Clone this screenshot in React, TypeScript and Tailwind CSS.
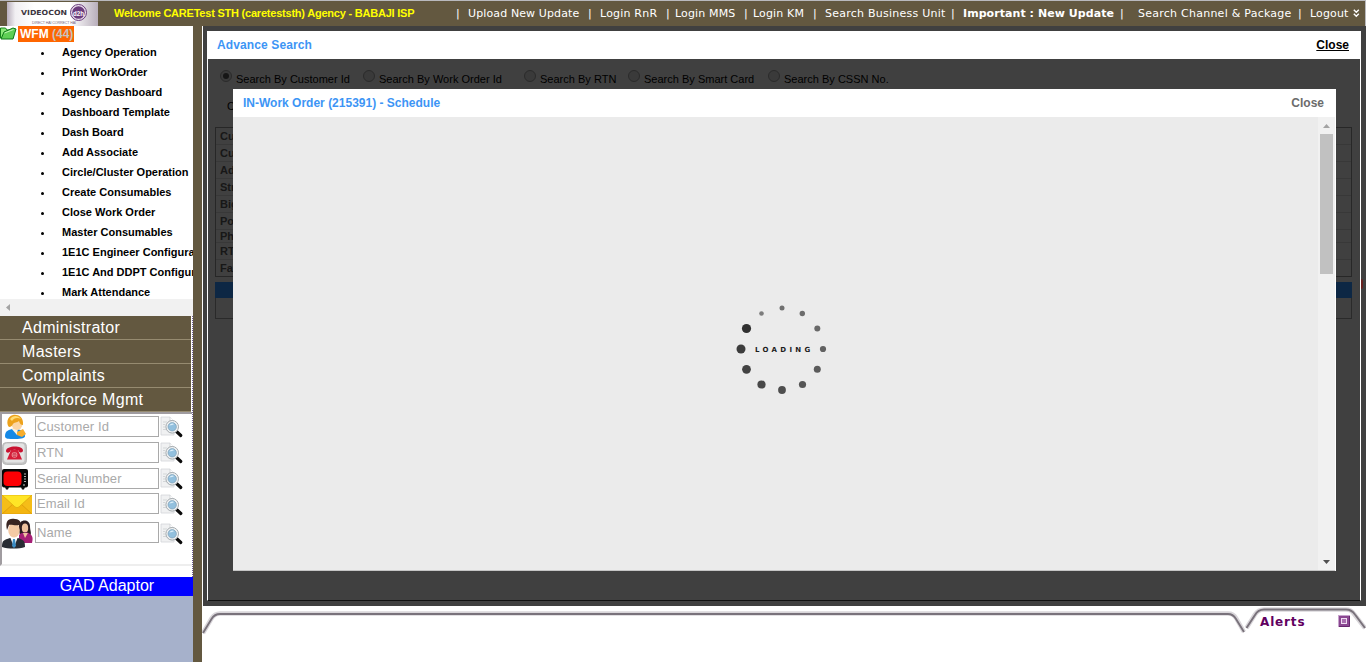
import type { ReactNode } from "react";

const sans = "font-['Liberation_Sans',Arial,sans-serif]";

const menuItems = [
  "Agency Operation",
  "Print WorkOrder",
  "Agency Dashboard",
  "Dashboard Template",
  "Dash Board",
  "Add Associate",
  "Circle/Cluster Operation",
  "Create Consumables",
  "Close Work Order",
  "Master Consumables",
  "1E1C Engineer Configuration",
  "1E1C And DDPT Configuration",
  "Mark Attendance",
];

function Logo() {
  return (
    <svg width="91" height="24" viewBox="0 0 91 24" className="mt-px ml-[7px] shrink-0">
      <defs>
        <linearGradient id="logoBg" x1="0" x2="1" y1="0" y2="0">
          <stop offset="0" stopColor="#b9b0bd" />
          <stop offset="0.09" stopColor="#f1eff2" />
          <stop offset="0.3" stopColor="#ffffff" />
          <stop offset="0.7" stopColor="#ffffff" />
          <stop offset="1" stopColor="#b8aebb" />
        </linearGradient>
      </defs>
      <rect width="91" height="24" fill="url(#logoBg)" />
      <text x="14" y="13" fontSize="7" textLength="46" lengthAdjust="spacingAndGlyphs" fontFamily="DejaVu Sans" fontWeight="bold" fill="#3c3540">VIDEOCON</text>
      <text x="25" y="21.500" fontSize="3.600" textLength="44" fontFamily="Liberation Sans" fill="#77657e">DIRECT HAI CORRECT HAI</text>
      <circle cx="71.500" cy="10.500" r="8" fill="#e9deec" stroke="#6b3c7d" strokeWidth="1" />
      <circle cx="71.500" cy="10.500" r="6.300" fill="#6b3c7d" />
      <text x="66" y="13.500" fontSize="8" textLength="11" lengthAdjust="spacingAndGlyphs" fontFamily="Liberation Sans" fontWeight="bold" fill="#ffffff">d2h</text>
    </svg>
  );
}

function Header() {
  const t = "block shrink-0 whitespace-pre";
  return (
    <header className="flex h-[26px] w-full border-t border-r border-[#b9b9bd] bg-[#635840] text-[11px] leading-[25px] text-white font-['DejaVu_Sans',Verdana,sans-serif]">
      <Logo />
      <span className={`ml-4 w-[342px] text-[11px] font-bold leading-6 tracking-[-0.22px] text-[#ffff00] ${sans} ${t}`}>
        Welcome CARETest STH (careteststh) Agency - BABAJI ISP
      </span>
      <span className={`w-3 ${t}`}>|</span>
      <span className={`w-[120px] tracking-[0.12px] ${t}`}>Upload New Update</span>
      <span className={`w-3 ${t}`}>|</span>
      <span className={`w-[66px] tracking-[0.2px] ${t}`}>Login RnR</span>
      <span className={`w-[9px] ${t}`}>|</span>
      <span className={`w-[69px] tracking-[0.15px] ${t}`}>Login MMS</span>
      <span className={`w-[9px] ${t}`}>|</span>
      <span className={`w-[60px] tracking-[0.15px] ${t}`}>Login KM</span>
      <span className={`w-3 ${t}`}>|</span>
      <span className={`w-[126px] tracking-[0.24px] ${t}`}>Search Business Unit</span>
      <span className={`w-3 ${t}`}>|</span>
      <span className={`w-[157px] font-bold tracking-[0.06px] ${t}`}>Important : New Update</span>
      <span className={`w-[18px] ${t}`}>|</span>
      <span className={`w-[160px] tracking-[0.25px] ${t}`}>Search Channel &amp; Package</span>
      <span className={`w-3 ${t}`}>|</span>
      <span className={`w-[43px] tracking-[0.15px] ${t}`}>Logout</span>
      <svg width="7" height="9" viewBox="0 0 7 9" className="mt-2 shrink-0" fill="none" stroke="#fff" strokeWidth="1.400">
        <path d="M.8.8 3.3 3.3 5.8.8M.8 4.8 3.3 7.3 5.8 4.8" />
      </svg>
    </header>
  );
}

function SearchIcon() {
  return (
    <svg width="24" height="22" viewBox="0 0 24 22" className="shrink-0">
      <path d="M1 1h9l4 4v14H1z" fill="#f0f1f2" stroke="#d3d6d9" strokeWidth=".8" />
      <path d="M10 1v4h4" fill="#fff" stroke="#c9cccf" strokeWidth=".7" />
      <path d="M3 6h4M3 8.500h2M3 11h2M3 13.500h3" stroke="#c6cacd" strokeWidth=".7" />
      <path d="m16.500 15.500 4.300 4" stroke="#0b0b0b" strokeWidth="3.200" strokeLinecap="round" />
      <circle cx="12.200" cy="10.800" r="6.300" fill="#f3f5f6" stroke="#a3a9ad" strokeWidth="1" />
      <circle cx="12.200" cy="10.800" r="4.200" fill="#92c0de" stroke="#7b9cb3" strokeWidth=".7" />
      <path d="M9.200 9.500a3.500 3.500 0 0 1 5-1.500c-1 1-3 1-5 1.500" fill="#dceef9" />
    </svg>
  );
}

function CustomerIcon() {
  return (
    <svg width="30" height="26" viewBox="0 0 30 26">
      <path d="M3 22c0-5 4-7 9-7 7 0 11 2 11 7 0 2-3 3-10 3S3 25 3 22z" fill="#1689e6" />
      <path d="m9 14 6 7 1-7z" fill="#fff2dc" />
      <ellipse cx="15" cy="10" rx="5.500" ry="6" fill="#fcd6a4" />
      <path d="M7 13C4 10 5 2 11 1c4-1 11 1 10 10-2 0-3-1-4-4-2 2-5 1-6 3-1 2-2 3-4 3z" fill="#eda21b" />
      <path d="M8 5c3-4 8-4 11 0-4-2-7-1-9 2z" fill="#ffdc72" />
      <path d="m15 18 6-3 3 5-4 3-5-2z" fill="#f7ad2c" />
    </svg>
  );
}

function PhoneIcon() {
  return (
    <svg width="25" height="23" viewBox="0 0 25 23">
      <rect x=".5" y=".5" width="24" height="22" rx="4" fill="#c4c4c4" stroke="#b8b8b8" />
      <rect x="2" y="1.500" width="20.500" height="19" rx="3" fill="#e3e3e3" />
      <path d="M4 9c0-6 17-6 17-.5 0 2.500-4.500 2.500-4.500 0-3-1-5-1-8 0C8.500 11 4 11.500 4 9z" fill="#c9112f" />
      <path d="M9 8h7l4 9.500H5z" fill="#d41c38" />
      <circle cx="12.500" cy="12.800" r="2.900" fill="#ee8792" />
      <path d="M11 11.300h3M10.500 12.800h4M11 14.300h3" stroke="#b30e29" strokeWidth=".6" />
    </svg>
  );
}

function TvIcon() {
  return (
    <svg width="26" height="21" viewBox="0 0 26 21">
      <rect width="26" height="18.500" rx="2" fill="#060606" />
      <path d="M3 18h4l-1 2.500H4zM19 18h4l-1 2.500h-2z" fill="#111" />
      <rect x="1.500" y="2.500" width="18" height="14.500" rx="4" fill="#fd0004" />
      <path d="M22 5h2M22 7.500h2M22 10h2M22 12.500h2" stroke="#c7c7c7" strokeWidth=".9" />
      <circle cx="22" cy="16" r="1" fill="#888" />
    </svg>
  );
}

function MailIcon() {
  return (
    <svg width="30" height="19" viewBox="0 0 30 19">
      <rect width="30" height="19" fill="#f5bd18" />
      <path d="m0 19 11-10 4 3 4-3 11 10z" fill="#f3b510" stroke="#da9a0c" strokeWidth=".8" />
      <path d="M0 0h30L18 11c-2 2-4 2-6 0z" fill="#ffe526" stroke="#dda90c" strokeWidth=".8" />
    </svg>
  );
}

function PeopleIcon() {
  return (
    <svg width="31" height="31" viewBox="0 0 31 31">
      <path d="M17 9c0-9 11-8 11-1 0 5 2 7 0 10h-9c-2-2-2-5-2-9" fill="#291a1e" />
      <ellipse cx="23" cy="10" rx="3.200" ry="4.500" fill="#efc19e" />
      <path d="M17 17c3-3 9-3 11-1 3 2 3 5 2 9H17z" fill="#a51e75" />
      <path d="m21 15 2 5 3-5z" fill="#efc19e" />
      <path d="M0 29c0-7 2-7 8-9h8c6 2 7 3 7 9-6 2-17 2-23 0z" fill="#292d34" />
      <path d="m8 19 4 10 4-10z" fill="#fff" />
      <path d="m11 21-1 7 2 2 2-2-1-7z" fill="#3b8dc5" />
      <ellipse cx="12" cy="12" rx="5.800" ry="7.500" fill="#f4caa5" />
      <path d="M5 12C3 3 6 0 13 1c6 0 7 5 5 11l-1-5c-4 1-8-1-10 0z" fill="#392522" />
    </svg>
  );
}

const lookups: { label: string; row: string; icon: ReactNode }[] = [
  { label: "Customer Id", row: "h-[26px]", icon: <CustomerIcon /> },
  { label: "RTN", row: "h-[26px]", icon: <PhoneIcon /> },
  { label: "Serial Number", row: "h-[26px]", icon: <TvIcon /> },
  { label: "Email Id", row: "h-[25px]", icon: <MailIcon /> },
  { label: "Name", row: "h-[33px]", icon: <PeopleIcon /> },
];

function Sidebar() {
  return (
    <aside className={`flex h-full w-[193px] shrink-0 flex-col bg-[#a6b1cb] ${sans}`}>
      <div className="h-[273px] shrink-0 overflow-hidden bg-white">
        <div className="flex h-4 items-start">
          <svg width="18" height="15" viewBox="0 0 18 15" className="shrink-0">
            <path d="M.5 12V2h5l1.500 2h6v8z" fill="#8be878" stroke="#16851b" />
            <path d="M1 13 4 6l9-4 3 1-3 10z" fill="#5fcf55" stroke="#0e7918" />
            <path d="m4.500 7 9-3.500" stroke="#c3f7b5" />
          </svg>
          <span className="block h-4 w-14 whitespace-pre bg-[#ff6600] pl-[2px] text-[12px] font-bold leading-4 text-white">
            WFM <span className="text-[#c8c2bd]">(44)</span>
          </span>
        </div>
        <ul className="text-[11px] font-bold leading-5 text-black">
          {menuItems.map((item) => (
            <li key={item} className="flex h-5 items-center whitespace-nowrap">
              <span className="mt-[3px] ml-[41px] mr-[18px] size-[3px] shrink-0 rounded-full bg-black" />
              <span>{item}</span>
            </li>
          ))}
        </ul>
      </div>
      <div className="flex h-[17px] shrink-0 items-center bg-[#f1f1f1] pl-[6px]">
        <svg width="4" height="7" viewBox="0 0 4 7"><path d="M4 0v7L0 3.500z" fill="#a3a3a3" /></svg>
      </div>
      <div className="flex h-[261px] shrink-0 flex-col border-r border-dotted border-[#6d5a94] bg-white">
        <nav className="w-[191px] text-[16px] leading-[23px] tracking-[0.3px] text-white">
          {["Administrator", "Masters", "Complaints", "Workforce Mgmt"].map((s) => (
            <div key={s} className="h-6 border-b border-[#968b70] bg-[#635840] pl-[22px]">{s}</div>
          ))}
        </nav>
        <div className="flex h-[154px] w-[192px] flex-col border-t-2 border-b-2 border-l-2 border-solid border-t-[#a09ca0] border-b-[#eeeeee] border-l-[#a09ca0]">
          {lookups.map((l) => (
            <div key={l.label} className={`flex shrink-0 items-center ${l.row}`}>
              <div className="flex w-[33px] shrink-0 items-center">{l.icon}</div>
              <div className="mb-[2px] h-[21px] w-[124px] shrink-0 border border-[#a9a9a9] pl-px text-[13px] leading-[19px] tracking-[0.12px] text-[#a9a9a9]">{l.label}</div>
              <div className="ml-px flex"><SearchIcon /></div>
            </div>
          ))}
        </div>
      </div>
      <div className="h-[19px] shrink-0 bg-[#0000ff] pl-[21px] text-center text-[16px] leading-[18px] text-white">GAD Adaptor</div>
    </aside>
  );
}

function Radio({ label, width, on }: { label: string; width: string; on?: boolean }) {
  return (
    <span className={`flex shrink-0 whitespace-nowrap ${width}`}>
      <span className="mr-1 flex size-3 shrink-0 items-center justify-center rounded-full border border-[#2b2b2b] bg-[#3a3a3a]">
        {on && <span className="size-[6px] rounded-full bg-[#161616]" />}
      </span>
      <span className="pt-[3px] text-[11px] leading-3 tracking-[0.01px] text-black">{label}</span>
    </span>
  );
}

const tableRows = [
  { t: "Customer Id", h: "h-[17px]" },
  { t: "Customer Name", h: "h-[17px]" },
  { t: "Address", h: "h-[17px]" },
  { t: "Street", h: "h-[17px]" },
  { t: "Big City", h: "h-[17px]" },
  { t: "Postal Code", h: "h-[17px]" },
  { t: "Phone", h: "h-[13px]" },
  { t: "RTN", h: "h-[17px]" },
  { t: "Fax", h: "h-[16px]" },
];

function Spinner() {
  const dots: [number, number, number, string][] = [
    [62, 18, 2.5, "#707070"], [82.3, 23.5, 2.7, "#6c6c6c"], [97.3, 38.5, 3, "#686868"],
    [103, 59, 3.1, "#616161"], [97.3, 79.3, 3.5, "#5b5b5b"], [82.5, 94.5, 3.6, "#555555"],
    [62, 100, 3.9, "#4e4e4e"], [41.5, 94.5, 4.1, "#484848"], [26.5, 79.3, 4.4, "#424242"],
    [21, 59, 4.5, "#3c3c3c"], [26.5, 38.5, 4.6, "#303030"], [41.5, 23.5, 2.3, "#7c7c7c"],
  ];
  return (
    <div className="grid h-[120px] w-[130px] place-items-center">
      <svg width="130" height="120" viewBox="0 0 130 120" className="col-start-1 row-start-1">
        {dots.map(([x, y, r, f]) => <circle key={`${x}-${y}`} cx={x} cy={y} r={r} fill={f} />)}
      </svg>
      <span className="col-start-1 row-start-1 w-[60px] whitespace-nowrap text-[7px] font-bold leading-[8px] tracking-[3.3px] text-[#1c1c1c] font-['DejaVu_Sans',sans-serif]">LOADING</span>
    </div>
  );
}

function ScheduleDialog() {
  return (
    <div className="absolute top-[58px] left-[25px] flex h-[482px] w-[1103px] flex-col bg-white">
      <div className="flex h-7 shrink-0 justify-between pr-3 pl-[10px] text-[12px] font-bold leading-7">
        <span className="text-[#3d95f5]">IN-Work Order (215391) - Schedule</span>
        <span className="text-[#6c6c6c]">Close</span>
      </div>
      <div className="mr-px flex h-[454px] border-b border-[#c5c5c5] bg-[#ebebeb]">
        <div className="flex-1 pt-[173px] pl-[487px]"><Spinner /></div>
        <div className="flex w-[17px] flex-col items-center bg-[#f1f1f1]">
          <svg width="17" height="17" viewBox="0 0 17 17"><path d="M5 11 8.500 7 12 11z" fill="#a3a3a3" /></svg>
          <div className="h-[140px] w-[13px] bg-[#c1c1c1]" />
          <svg width="17" height="17" viewBox="0 0 17 17" className="mt-auto"><path d="M5 7h7l-3.500 4z" fill="#505050" /></svg>
        </div>
      </div>
    </div>
  );
}

function Workspace() {
  return (
    <div className={`relative flex h-[570px] w-[1154px] flex-col border-x border-b border-x-white border-b-[#111111] bg-[#404040] ${sans}`}>
      <div className="flex h-7 shrink-0 justify-between bg-white pr-[11px] pl-[9px] text-[12px] font-bold leading-7">
        <span className="tracking-[0.12px] text-[#3d95f5]">Advance Search</span>
        <span className="text-black underline">Close</span>
      </div>
      <div className="mt-[11px] flex h-[26px] shrink-0 pl-3">
        <Radio label="Search By Customer Id" width="w-[143px]" on />
        <Radio label="Search By Work Order Id" width="w-[161px]" />
        <Radio label="Search By RTN" width="w-[104px]" />
        <Radio label="Search By Smart Card" width="w-[140px]" />
        <Radio label="Search By CSSN No." width="w-[130px]" />
      </div>
      <div className="h-[31px] shrink-0 pl-[19px] pt-[2px] text-[11px] leading-4 text-black">Customer Id</div>
      <div className="mx-[7px] h-[150px] w-[1137px] shrink-0 border border-[#272727]">
        {tableRows.map((r) => (
          <div key={r.t} className={`flex items-center border-b border-[#383838] pl-1 text-[11px] font-bold leading-4 text-[#171717] last:border-b-0 ${r.h}`}>{r.t}</div>
        ))}
      </div>
      <div className="mx-[7px] mt-[5px] h-4 w-[1137px] shrink-0 bg-[#0d2744]" />
      <div className="mx-[7px] h-[21px] w-[1137px] shrink-0 border border-t-0 border-[#2a2a2a]" />
      <ScheduleDialog />
    </div>
  );
}

function AlertsBar() {
  return (
    <footer className="grid h-14 w-full overflow-hidden bg-white">
      <svg width="1164" height="56" viewBox="0 0 1164 56" className="col-start-1 row-start-1" fill="none">
        <path d="M1 27 9.500 12.500Q12.500 7.500 18 7.500H1026Q1031.500 7.500 1034 12L1042 26" stroke="#d9d6da" strokeWidth="4.500" />
        <path d="M1 27 9.500 13Q12.500 8 18 8H1026Q1031 8 1034 13L1042 26" stroke="#79727b" strokeWidth="1.900" />
        <path d="M1044.500 22 1053 8.500Q1056 3.500 1062 3.500H1144Q1149.500 3.500 1152 8L1163 22" stroke="#d9d6da" strokeWidth="4.500" />
        <path d="M1044.500 22 1053 9Q1056 3.500 1062 3.500H1144Q1149.500 3.500 1153 8.500L1163 22" stroke="#79727b" strokeWidth="2" />
      </svg>
      <div className="col-start-1 row-start-1 flex h-[33px] items-center pl-[1058px]">
        <span className="w-[78px] text-[12px] font-bold leading-[33px] tracking-[0.85px] text-[#61005f] font-['DejaVu_Sans',Verdana,sans-serif]">Alerts</span>
        <svg width="12" height="12" viewBox="0 0 12 12" className="-mt-[3px] shrink-0">
          <rect x=".5" y=".5" width="11" height="11" fill="#8a4791" stroke="#c7a3cd" />
          <path d="M11.500 1v10.500H1" fill="none" stroke="#65266d" />
          <rect x="3.500" y="3.500" width="5" height="5" fill="#a86eaf" stroke="#eddcf0" />
        </svg>
      </div>
    </footer>
  );
}

export default function App() {
  return (
    <div className="flex h-[662px] w-[1366px] flex-col overflow-hidden bg-white">
      <Header />
      <div className="flex h-[636px]">
        <Sidebar />
        <div className="w-[9px] shrink-0 bg-[#635840]" />
        <main className="flex w-[1164px] flex-col">
          <div className="ml-px flex h-[580px] w-[1163px] shrink-0 bg-[#404040] pt-[5px] pl-1">
            <Workspace />
            <span className="mt-[248px] h-[10px] w-[2px] rounded-r-full bg-[#67201f]" />
          </div>
          <AlertsBar />
        </main>
      </div>
    </div>
  );
}
